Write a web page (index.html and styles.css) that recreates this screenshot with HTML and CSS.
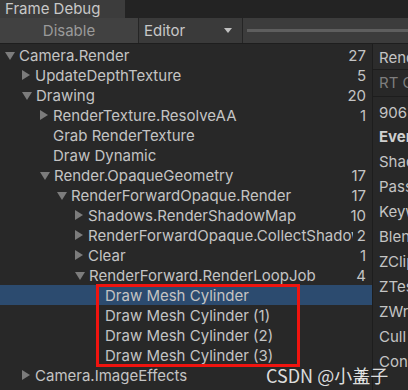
FILE: index.html
```html
<!DOCTYPE html>
<html lang="en">
<head>
    <meta charset="UTF-8">
    <meta name="viewport" content="width=device-width, initial-scale=1.0">
    <title>Frame Debug</title>
    <link rel="stylesheet" href="styles.css">
</head>
<body>
    <div class="window">
        <div class="tabbar">
            <div class="tab">Frame Debug</div>
        </div>
        <div class="toolbar">
            <div class="btn-disable">Disable</div>
            <div class="dropdown">
                <span>Editor</span>
                <span class="arrow"></span>
            </div>
            <div class="slider"><div class="track"></div></div>
        </div>
        <div class="main">
            <div class="tree">
                <div class="row l0"><span class="tri open"></span><span class="name">Camera.Render</span><span class="count">27</span></div>
                <div class="row l1"><span class="tri"></span><span class="name">UpdateDepthTexture</span><span class="count">5</span></div>
                <div class="row l1"><span class="tri open"></span><span class="name">Drawing</span><span class="count">20</span></div>
                <div class="row l2"><span class="tri"></span><span class="name">RenderTexture.ResolveAA</span><span class="count">1</span></div>
                <div class="row l2"><span class="tri none"></span><span class="name">Grab RenderTexture</span><span class="count"></span></div>
                <div class="row l2"><span class="tri none"></span><span class="name">Draw Dynamic</span><span class="count"></span></div>
                <div class="row l2"><span class="tri open"></span><span class="name">Render.OpaqueGeometry</span><span class="count">17</span></div>
                <div class="row l3"><span class="tri open"></span><span class="name">RenderForwardOpaque.Render</span><span class="count">17</span></div>
                <div class="row l4"><span class="tri"></span><span class="name">Shadows.RenderShadowMap</span><span class="count">10</span></div>
                <div class="row l4"><span class="tri"></span><span class="name">RenderForwardOpaque.CollectShadows</span><span class="count">2</span></div>
                <div class="row l4"><span class="tri"></span><span class="name">Clear</span><span class="count">1</span></div>
                <div class="row l4"><span class="tri open"></span><span class="name">RenderForward.RenderLoopJob</span><span class="count">4</span></div>
                <div class="row l5 selected"><span class="tri none"></span><span class="name">Draw Mesh Cylinder</span><span class="count"></span></div>
                <div class="row l5"><span class="tri none"></span><span class="name">Draw Mesh Cylinder (1)</span><span class="count"></span></div>
                <div class="row l5"><span class="tri none"></span><span class="name">Draw Mesh Cylinder (2)</span><span class="count"></span></div>
                <div class="row l5"><span class="tri none"></span><span class="name">Draw Mesh Cylinder (3)</span><span class="count"></span></div>
                <div class="row l1"><span class="tri"></span><span class="name">Camera.ImageEffects</span><span class="count">2</span></div>
                <div class="highlight-box"></div>
            </div>
            <div class="details">
                <div class="d-head">Render</div>
                <div class="d-rt">RT Count</div>
                <div class="d-body">
                    <div class="d-line">906</div>
                    <div class="d-line bold">Event</div>
                    <div class="d-line">Shader</div>
                    <div class="d-line">Pass</div>
                    <div class="d-line">Keywords</div>
                    <div class="d-line">Blend</div>
                    <div class="d-line">ZClip</div>
                    <div class="d-line">ZTest</div>
                    <div class="d-line">ZWrite</div>
                    <div class="d-line">Cull</div>
                    <div class="d-line">Conservative</div>
                </div>
            </div>
        </div>
        <div class="watermark">CSDN @小盖子</div>
    </div>
</body>
</html>
```

FILE: styles.css
```css
body {
    margin: 0;
    font-family: 'Inter', 'Noto Sans CJK SC', sans-serif;
    font-size: 15px;
    color: #c4c4c4;
    background: #282828;
    overflow: hidden;
}

.window {
    position: relative;
    width: 408px;
    height: 390px;
    overflow: hidden;
}

.tabbar {
    height: 18px;
    background: #232323;
    display: flex;
}

.tab {
    width: 120px;
    background: #3c3c3c;
    padding-left: 5px;
    line-height: 18px;
    color: #c8c8c8;
}

.toolbar {
    height: 25px;
    display: flex;
    background: #3c3c3c;
    border-bottom: 1px solid #1e1e1e;
}

.btn-disable {
    width: 138px;
    text-align: center;
    line-height: 25px;
    color: #9a9a9a;
    background: #414141;
    border-right: 1px solid #252525;
}

.dropdown {
    width: 104px;
    display: flex;
    align-items: center;
    justify-content: space-between;
    padding: 0 10px 0 5px;
    box-sizing: border-box;
    background: #3a3a3a;
    border-right: 1px solid #252525;
    color: #c8c8c8;
}

.arrow {
    width: 0;
    height: 0;
    border-left: 4px solid transparent;
    border-right: 4px solid transparent;
    border-top: 5px solid #c0c0c0;
}

.slider {
    flex: 1;
    display: flex;
    align-items: center;
    padding-left: 4px;
}

.track {
    height: 3px;
    width: 100%;
    background: #5e5e5e;
}

.main {
    display: flex;
    height: 346px;
}

.tree {
    position: relative;
    width: 372px;
    padding-top: 1px;
    border-right: 1px solid #1d1d1d;
}

.row {
    height: 20px;
    display: flex;
    align-items: center;
    white-space: nowrap;
}

.row.selected {
    background: #2c4b6f;
}

.tri {
    flex: none;
    width: 0;
    height: 0;
    border-top: 5px solid transparent;
    border-bottom: 5px solid transparent;
    border-left: 8px solid #7c7c7c;
    margin-right: 5px;
}

.tri.open {
    border-left: 5px solid transparent;
    border-right: 5px solid transparent;
    border-top: 8px solid #7c7c7c;
    border-bottom: 0;
    margin-right: 4px;
    margin-top: 2px;
}

.tri.none {
    border-color: transparent;
}

.name {
    flex: 1;
    overflow: hidden;
}

.count {
    flex: none;
    padding: 0 6px 0 4px;
}

.l0 { padding-left: 5px; }
.l1 { padding-left: 22px; }
.l2 { padding-left: 40px; }
.l3 { padding-left: 57px; }
.l4 { padding-left: 75px; }
.l5 { padding-left: 92px; }

.highlight-box {
    position: absolute;
    left: 96px;
    top: 240px;
    width: 198px;
    height: 77px;
    border: 3px solid #f0140f;
}

.details {
    flex: 1;
    white-space: nowrap;
    overflow: hidden;
}

.d-head {
    height: 25px;
    line-height: 27px;
    padding-left: 6px;
    border-bottom: 1px solid #1d1d1d;
    background: #2c2c2c;
}

.d-rt {
    height: 26px;
    line-height: 26px;
    padding-left: 6px;
    color: #7e7e7e;
    border-bottom: 1px solid #1d1d1d;
}

.d-body {
    padding: 5px 0 0 6px;
}

.d-line {
    height: 25px;
    line-height: 25px;
}

.d-line:first-child {
    height: 22px;
    line-height: 22px;
}

.d-line.bold {
    font-weight: bold;
    color: #cfcfcf;
}

.watermark {
    position: absolute;
    left: 266px;
    top: 362px;
    font-size: 18px;
    color: rgba(255, 255, 255, 0.85);
    font-family: 'Noto Sans CJK SC', sans-serif;
}
```
